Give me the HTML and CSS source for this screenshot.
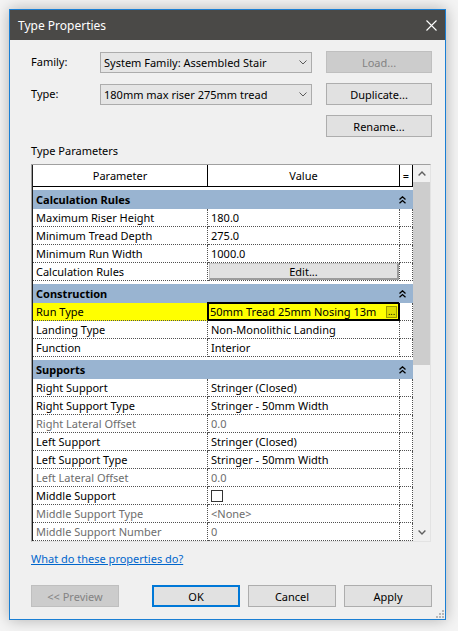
FILE: index.html
```html
<!DOCTYPE html>
<html>
<head>
<meta charset="utf-8">
<title>Type Properties</title>
<link rel="stylesheet" href="styles.css">
</head>
<body>
<div class="window">
  <div class="titlebar">
    <span class="title">Type Properties</span>
    <svg class="close" width="11" height="11" viewBox="0 0 11 11"><path d="M0.5 0.5 L10.5 10.5 M10.5 0.5 L0.5 10.5" stroke="#ffffff" stroke-width="1.1" fill="none"/></svg>
  </div>
  <div class="content">
    <div class="top">
      <span class="lbl">Family:</span>
      <div class="combo"><span>System Family: Assembled Stair</span><svg width="8" height="5" viewBox="0 0 8 5"><path d="M0.5 0.5 L4 4 L7.5 0.5" stroke="#5a5a5a" fill="none"/></svg></div>
      <button class="btn disabled">Load...</button>
      <span class="lbl">Type:</span>
      <div class="combo"><span>180mm max riser 275mm tread</span><svg width="8" height="5" viewBox="0 0 8 5"><path d="M0.5 0.5 L4 4 L7.5 0.5" stroke="#5a5a5a" fill="none"/></svg></div>
      <button class="btn">Duplicate...</button>
      <button class="btn rename">Rename...</button>
    </div>

    <div class="section-label">Type Parameters</div>

    <div class="frame">
      <div class="table">
        <div class="hdr">
          <div class="hc p">Parameter</div>
          <div class="hc v">Value</div>
          <div class="hc e">=</div>
        </div>

        <div class="group"><div class="band"><span>Calculation Rules</span><svg width="7" height="8" viewBox="0 0 7 8"><path d="M0.5 3.5 L3.5 0.8 L6.5 3.5 M0.5 7.3 L3.5 4.6 L6.5 7.3" stroke="#000" stroke-width="1.3" fill="none"/></svg></div></div>
        <div class="row"><div class="c p">Maximum Riser Height</div><div class="c v">180.0</div><div class="c e"></div></div>
        <div class="row"><div class="c p">Minimum Tread Depth</div><div class="c v">275.0</div><div class="c e"></div></div>
        <div class="row"><div class="c p">Minimum Run Width</div><div class="c v">1000.0</div><div class="c e"></div></div>
        <div class="row"><div class="c p">Calculation Rules</div><div class="c v btncell"><div class="editbtn">Edit...</div></div><div class="c e"></div></div>

        <div class="group"><div class="band"><span>Construction</span><svg width="7" height="8" viewBox="0 0 7 8"><path d="M0.5 3.5 L3.5 0.8 L6.5 3.5 M0.5 7.3 L3.5 4.6 L6.5 7.3" stroke="#000" stroke-width="1.3" fill="none"/></svg></div></div>
        <div class="row"><div class="c p hl">Run Type</div><div class="c v edit"><span class="edit-text">50mm Tread 25mm Nosing 13m</span><span class="dots">...</span></div><div class="c e"></div></div>
        <div class="row"><div class="c p">Landing Type</div><div class="c v">Non-Monolithic Landing</div><div class="c e"></div></div>
        <div class="row"><div class="c p">Function</div><div class="c v">Interior</div><div class="c e"></div></div>

        <div class="group"><div class="band"><span>Supports</span><svg width="7" height="8" viewBox="0 0 7 8"><path d="M0.5 3.5 L3.5 0.8 L6.5 3.5 M0.5 7.3 L3.5 4.6 L6.5 7.3" stroke="#000" stroke-width="1.3" fill="none"/></svg></div></div>
        <div class="row"><div class="c p">Right Support</div><div class="c v">Stringer (Closed)</div><div class="c e"></div></div>
        <div class="row"><div class="c p">Right Support Type</div><div class="c v">Stringer - 50mm Width</div><div class="c e"></div></div>
        <div class="row dim"><div class="c p">Right Lateral Offset</div><div class="c v">0.0</div><div class="c e"></div></div>
        <div class="row"><div class="c p">Left Support</div><div class="c v">Stringer (Closed)</div><div class="c e"></div></div>
        <div class="row"><div class="c p">Left Support Type</div><div class="c v">Stringer - 50mm Width</div><div class="c e"></div></div>
        <div class="row dim"><div class="c p">Left Lateral Offset</div><div class="c v">0.0</div><div class="c e"></div></div>
        <div class="row"><div class="c p">Middle Support</div><div class="c v"><span class="chk"></span></div><div class="c e"></div></div>
        <div class="row dim"><div class="c p">Middle Support Type</div><div class="c v">&lt;None&gt;</div><div class="c e"></div></div>
        <div class="row dim"><div class="c p">Middle Support Number</div><div class="c v">0</div><div class="c e"></div></div>
      </div>
      <div class="scroll">
        <div class="sb-btn"><svg width="8" height="5" viewBox="0 0 8 5"><path d="M0.6 4.4 L4 1 L7.4 4.4" stroke="#606060" stroke-width="1.4" fill="none"/></svg></div>
        <div class="thumb"></div>
        <div class="track"></div>
        <div class="sb-btn"><svg width="8" height="5" viewBox="0 0 8 5"><path d="M0.6 0.6 L4 4 L7.4 0.6" stroke="#606060" stroke-width="1.4" fill="none"/></svg></div>
      </div>
    </div>

    <a class="help" href="#">What do these properties do?</a>

    <div class="footer">
      <button class="btn fbtn disabled">&lt;&lt; Preview</button>
      <button class="btn fbtn ok">OK</button>
      <button class="btn fbtn">Cancel</button>
      <button class="btn fbtn">Apply</button>
    </div>
  </div>
  <svg class="grip" width="8" height="8" viewBox="0 0 8 8">
    <rect x="6" y="0" width="2" height="2" fill="#b8b8b8"/>
    <rect x="3" y="3" width="2" height="2" fill="#b8b8b8"/>
    <rect x="6" y="3" width="2" height="2" fill="#b8b8b8"/>
    <rect x="0" y="6" width="2" height="2" fill="#b8b8b8"/>
    <rect x="3" y="6" width="2" height="2" fill="#b8b8b8"/>
    <rect x="6" y="6" width="2" height="2" fill="#b8b8b8"/>
  </svg>
</div>
</body>
</html>
```

FILE: styles.css
```css
* { box-sizing: border-box; }
html, body { margin: 0; }
body {
  background: #f4f4f4;
  padding: 9px;
  width: 458px;
  height: 631px;
  overflow: hidden;
  font-family: "Noto Sans", "Open Sans", sans-serif;
  font-size: 11px;
  color: #000;
}
.window {
  width: 437px;
  height: 611px;
  border: 1px solid #1a7fd4;
  background: #f0f0f0;
  display: flex;
  flex-direction: column;
  position: relative;
  box-shadow: 0 0 14px rgba(0, 0, 0, 0.28);
}
.titlebar {
  height: 30px;
  flex: none;
  background: #4a4947;
  color: #fff;
  display: flex;
  align-items: center;
  justify-content: space-between;
  padding: 0 8px 0 8px;
}
.title { font-size: 12px; }
.close { display: block; }
.content {
  flex: 1;
  display: flex;
  flex-direction: column;
  padding: 11px 12px 12px 21px;
}
.top {
  display: grid;
  grid-template-columns: 55px 212px 106px;
  column-gap: 14px;
  row-gap: 10px;
  grid-auto-rows: 22px;
  align-items: center;
}
.lbl { line-height: 14px; }
.combo {
  height: 21px;
  border: 1px solid #acacac;
  background: #e5e5e5;
  display: flex;
  align-items: center;
  justify-content: space-between;
  padding: 0 4px 0 3px;
}
.combo svg { display: block; }
.btn {
  height: 22px;
  border: 1px solid #adadad;
  background: #e1e1e1;
  font: inherit;
  color: #000;
  padding: 0;
  margin: 0;
}
.btn.disabled {
  background: #cccccc;
  border-color: #bfbfbf;
  color: #838383;
}
.rename { grid-column: 3; }
.section-label {
  margin-top: 7px;
  line-height: 14px;
  margin-bottom: 6px;
}
.frame {
  width: 400px;
  height: 378px;
  flex: none;
  display: flex;
  border: 1px solid;
  border-color: #a0a0a0 #e3e3e3 #e3e3e3 #a0a0a0;
  background: #fff;
}
.table {
  width: 381px;
  border-left: 1px solid #1e1e1e;
  display: flex;
  flex-direction: column;
}
.hdr {
  display: flex;
  height: 22px;
  border-bottom: 1px solid #000;
  flex: none;
}
.hc {
  display: flex;
  align-items: center;
  justify-content: center;
  border-right: 1px solid #000;
}
.p { width: 175px; }
.v { width: 192px; }
.e { width: 13px; }
.group { height: 22px; padding-top: 3px; flex: none; }
.band {
  height: 19px;
  background: #99b4d1;
  display: flex;
  align-items: center;
  justify-content: space-between;
  padding: 0 7px 0 3px;
  font-weight: bold;
}
.band svg { display: block; }
.row { display: flex; height: 18px; flex: none; }
.c {
  border-right: 1px dotted #505050;
  border-bottom: 1px dotted #505050;
  padding-left: 3px;
  display: flex;
  align-items: center;
  white-space: nowrap;
  overflow: hidden;
}
.dim .c { color: #6d6d6d; }
.hl { background: #ffff00; }
.btncell { padding-left: 1px; }
.editbtn {
  width: 190px;
  height: 17px;
  background: #e1e1e1;
  border: 1px solid #c4c4c4;
  border-right: 2px solid #9c9c9c;
  border-bottom: 2px solid #9c9c9c;
  display: flex;
  align-items: center;
  justify-content: center;
}
.edit {
  background: #ffff00;
  overflow: visible;
  border-right: 1px solid #000;
  border-bottom: 1px solid #000;
  box-shadow: inset 0 0 0 1px #000, -1px -1px 0 #000;
  padding-left: 2px;
  padding-right: 2px;
  justify-content: space-between;
}
.edit-text {
  white-space: nowrap;
}
.dots {
  width: 11px;
  height: 12px;
  background: #dede00;
  border: 1px solid #9a9a00;
  font-size: 9px;
  line-height: 8px;
  display: flex;
  align-items: center;
  justify-content: center;
  flex: none;
}
.chk {
  width: 12px;
  height: 12px;
  border: 1px solid #333;
  background: #fff;
}
.scroll {
  width: 17px;
  background: #f0f0f0;
  display: flex;
  flex-direction: column;
}
.sb-btn {
  height: 17px;
  display: flex;
  align-items: center;
  justify-content: center;
  flex: none;
}
.sb-btn svg { display: block; }
.thumb { height: 183px; background: #cdcdcd; flex: none; }
.track { flex: 1; }
.help {
  margin-top: 10px;
  line-height: 14px;
  color: #0066cc;
  text-decoration: underline;
  align-self: flex-start;
}
.footer {
  margin-top: auto;
  display: flex;
  gap: 8px;
}
.fbtn { width: 88px; }
.ok {
  margin-left: 25px;
  border: 2px solid #0078d7;
}
.grip {
  position: absolute;
  right: 1px;
  bottom: 1px;
  display: block;
}
```
